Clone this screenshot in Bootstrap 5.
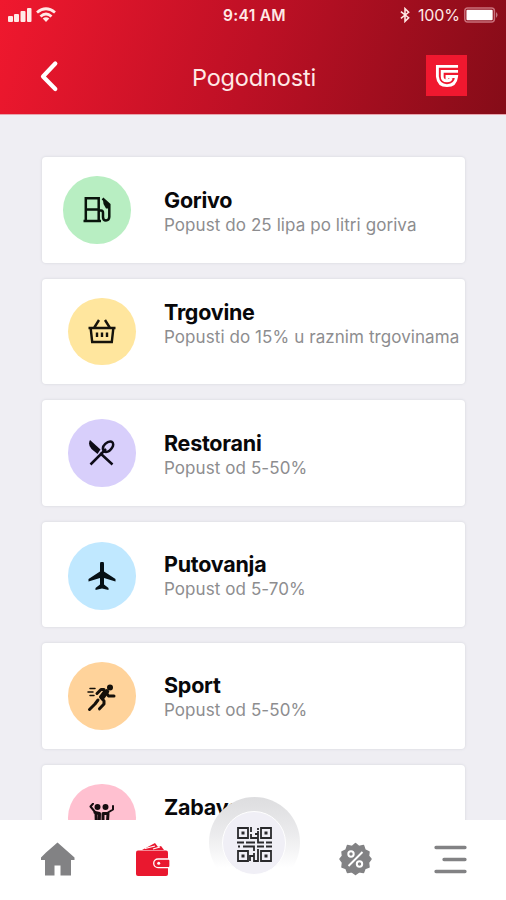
<!DOCTYPE html>
<html lang="hr">
<head>
<meta charset="utf-8">
<meta name="viewport" content="width=device-width, initial-scale=1">
<title>Pogodnosti</title>
<link href="https://cdn.jsdelivr.net/npm/bootstrap@5.3.0/dist/css/bootstrap.min.css" rel="stylesheet">
<style>
body{font-family:Inter,"Liberation Sans",sans-serif;background:#efeef3;color:#0b0b0d}
svg{display:block;flex:none}
.screen{width:506px;height:900px}
.top-area{height:115px;background:linear-gradient(107deg,#f0182e 0%,#bd1025 50%,#850c18 100%);border-bottom:1px solid #e7a4ad;color:#fff}
.status{height:28px;padding:0 7px 0 8px}
.clock{font-size:15.5px;font-weight:600;letter-spacing:.3px;line-height:29px;padding:1px 0 0 2px;color:#ffe9e6}
.battery-label{font-size:16px;line-height:28px;letter-spacing:-.1px;color:#ffe9e6}
.title-bar{height:86px;padding:9px 39px 0 39px}
.page-title{font-size:23.5px;font-weight:400;line-height:30px;color:#ffe9e6;letter-spacing:-.15px;padding:5px 0 0 2px}
.brand{width:41px;height:41px;background:#f0182f}
.offers{height:705px;padding:42px 41px 0;gap:16px}
.offer{height:105.5px;border:0;border-radius:4px;box-shadow:0 0 2px 1px #e1e1e7;margin-left:1px}
.icon-col{width:122px;padding-left:26px}
.icon-col.near{padding-left:21px}
.disc{width:67.5px;height:67.5px}
.disc.low{margin-top:3px}
.green{background:#b8eec2}.yellow{background:#ffe69e}.violet{background:#d8cffb}
.blue{background:#c0e8ff}.orange{background:#ffd39b}.pink{background:#ffc0d0}
.copy{padding-top:31px}
.copy.rise{padding-top:21px}
.copy.mid{padding-top:30px}
.name{font-size:21.5px;font-weight:700;line-height:25px;letter-spacing:-.25px;color:#08080a}
.desc{font-size:17px;line-height:24px;letter-spacing:.08px;color:#8d8d8f;white-space:nowrap}
.tabs{height:80px;color:#828284}
.tabs a{color:inherit}
.tab-row{padding:0 39px 2px 40px;height:80px}
.tab-pair{gap:60px}
.tab-pair.end{gap:62px}
.qr-ring{width:91px;height:91px;left:208.5px;top:-23px;background:linear-gradient(#dddddf 0%,#ebebed 40%,#fff 78%)}
.qr-core{width:64px;height:64px;background:#f0eff6;border:1.5px solid #fff}
</style>
</head>
<body>
<main class="screen d-flex flex-column overflow-hidden">
<header class="top-area flex-shrink-0">
  <div class="status row g-0">
    <div class="col-4 d-flex align-items-center gap-1">
      <svg width="24" height="16" viewBox="0 0 24 16" fill="#ffe9e6"><rect y="9" width="5" height="6" rx="1"/><rect x="6" y="7" width="5" height="8" rx="1"/><rect x="12.500" y="4" width="5" height="11" rx="1"/><rect x="19" y="1" width="4.500" height="14" rx="1"/></svg>
      <svg width="20" height="16" viewBox="0 0 20 16" fill="none" stroke="#ffe9e6" stroke-width="2.800"><path d="M1 5.500Q10-2 19 5.500M4.500 9.500Q10 4.500 15.500 9.500"/><path d="M6.700 11.500Q10 8.800 13.300 11.500L10 15Z" fill="#ffe9e6" stroke="none"/></svg>
    </div>
    <div class="col-4 text-center clock">9:41 AM</div>
    <div class="col-4 d-flex align-items-center justify-content-end">
      <svg class="me-2" width="10" height="16" viewBox="0 0 11 16" fill="none" stroke="#ffe9e6" stroke-width="1.700"><path d="M1 4.300 9.500 11 5.500 15V1L9.500 5 1 11.700"/></svg>
      <span class="battery-label me-1">100%</span>
      <svg width="35" height="16" viewBox="0 0 36 16"><rect x=".8" y=".8" width="30.500" height="14.400" rx="3" fill="none" stroke="#c9707b" stroke-width="1.500"/><rect x="2.500" y="2.700" width="27" height="10.600" rx="1" fill="#fff"/><path d="M33 5q3 3 0 6z" fill="#c3808a"/></svg>
    </div>
  </div>
  <div class="title-bar d-flex align-items-center justify-content-between">
    <a href="#" aria-label="Natrag"><svg width="41" height="32" viewBox="0 0 41 32" fill="none" stroke="#fff" stroke-width="4.200" stroke-linecap="round" stroke-linejoin="round"><path d="M16.300 3.500 4 16.500 16.300 29"/></svg></a>
    <h1 class="page-title mb-0">Pogodnosti</h1>
    <div class="brand d-flex align-items-center justify-content-center">
      <svg width="24" height="24" viewBox="0 0 25 25" fill="none" stroke="#fff" stroke-width="3"><path d="M24 2.500H2.500V13Q3.500 22.500 12.500 22.500T22.500 13H12.500V16.500"/><path d="M24 7.700H7.500V13Q7.500 17.500 12.500 17.500Q16 17.500 17 14.500"/></svg>
    </div>
  </div>
</header>

<section class="offers d-flex flex-column flex-shrink-0 overflow-hidden">
  <article class="card offer flex-row flex-shrink-0">
    <div class="icon-col near d-flex align-items-center flex-shrink-0"><div class="disc green rounded-circle d-flex align-items-center justify-content-center">
      <svg width="28" height="27" viewBox="0 0 28 27" fill="none" stroke="#09140c" stroke-width="2.500"><path d="M2.800 25V2.200H15.700V25M.5 24.900H18M3 13.500H15.700M15.700 14.500H18Q20 14.500 20 17V21Q20 24.500 23 24.500T26.300 21V8.500L19.500 2.500"/><path d="M20 4 26.500 9V12.500H23L20.500 8Z" fill="#09140c" stroke="none"/></svg>
    </div></div>
    <div class="copy"><h2 class="name mb-0">Gorivo</h2><p class="desc mb-0">Popust do 25 lipa po litri goriva</p></div>
  </article>
  <article class="card offer flex-row flex-shrink-0">
    <div class="icon-col d-flex align-items-center flex-shrink-0"><div class="disc yellow rounded-circle d-flex align-items-center justify-content-center">
      <svg width="28" height="26" viewBox="0 0 28 26" fill="none" stroke="#15130c" stroke-width="2.400"><path d="M.5 10H27.500M2.700 10.500 4.200 24H23.800L25.300 10.500M6.300 9.500 11 2M21.700 9.500 17 2"/><path d="M9 14.500V19M14 14.500V19M19 14.500V19"/></svg>
    </div></div>
    <div class="copy rise"><h2 class="name mb-0">Trgovine</h2><p class="desc mb-0">Popusti do 15% u raznim trgovinama</p></div>
  </article>
  <article class="card offer flex-row flex-shrink-0">
    <div class="icon-col d-flex align-items-center flex-shrink-0"><div class="disc violet rounded-circle d-flex align-items-center justify-content-center">
      <svg width="27" height="26" viewBox="0 0 27 26" fill="none" stroke="#0e0c17" stroke-width="2.500"><path d="M2.500 24.500 18 9M12 13 24.500 24.500"/><path d="M2 0 12.500 9.500 9.500 14 3.500 9Q-.5 4.500 2 0Z" fill="#0e0c17" stroke="none"/><path d="M15.500 10.500C13 6 20 .5 23.500 1.700 28 4 22.500 12 18 12Q16 12 15.500 10.500Z"/></svg>
    </div></div>
    <div class="copy"><h2 class="name mb-0">Restorani</h2><p class="desc mb-0">Popust od 5-50%</p></div>
  </article>
  <article class="card offer flex-row flex-shrink-0">
    <div class="icon-col d-flex align-items-center flex-shrink-0"><div class="disc low blue rounded-circle d-flex align-items-center justify-content-center">
      <svg width="28" height="28" viewBox="0 0 28 28" fill="#061016"><path d="M12 2Q12-.5 14-.5T16 2V9.500L27.500 17V19.500L16 16V22.500L20.500 26V28L14 26.400 7.500 28V26L12 22.500V16L.5 19.500V17L12 9.500Z"/></svg>
    </div></div>
    <div class="copy mid"><h2 class="name mb-0">Putovanja</h2><p class="desc mb-0">Popust od 5-70%</p></div>
  </article>
  <article class="card offer flex-row flex-shrink-0">
    <div class="icon-col d-flex align-items-center flex-shrink-0"><div class="disc orange rounded-circle d-flex align-items-center justify-content-center">
      <svg class="mt-1" width="29" height="28" viewBox="0 0 29 28" fill="none" stroke="#15100a" stroke-width="3" stroke-linecap="round" stroke-linejoin="round"><circle cx="23" cy="3.500" r="3" fill="#15100a" stroke="none"/><path d="M10 9.500 14 5.500H17M18 7 13.500 13 17 17V20L12.500 24.800M18 7 21.500 12H27M11 16 8 20 2.500 25.500"/><path d="M20 7.500 15.500 13.500" stroke-width="4.500"/><path d="M3 4.500H8M1 8H6M3 11.500H7" stroke-width="1.500"/></svg>
    </div></div>
    <div class="copy mid"><h2 class="name mb-0">Sport</h2><p class="desc mb-0">Popust od 5-50%</p></div>
  </article>
  <article class="card offer flex-row flex-shrink-0">
    <div class="icon-col d-flex align-items-center flex-shrink-0"><div class="disc pink rounded-circle d-flex align-items-center justify-content-center">
      <svg width="25" height="28" viewBox="0 0 25 28" fill="none" stroke="#160d10" stroke-width="2" stroke-linecap="round" stroke-linejoin="round"><circle cx="8.500" cy="4" r="2" fill="#160d10"/><circle cx="16.500" cy="4" r="2" fill="#160d10"/><path d="M4 .8 1.500 3.500 6 9M24 3V6.500L19 9.500"/><path d="M6 9.500 10.500 10.500 10 27M14 10.500H19L18 27M7 10 7.500 27M14 11V27" stroke-width="3"/></svg>
    </div></div>
    <div class="copy mid"><h2 class="name mb-0">Zabava</h2></div>
  </article>
</section>

<nav class="tabs bg-white position-relative flex-shrink-0">
  <div class="tab-row d-flex align-items-center justify-content-between">
    <div class="tab-pair d-flex align-items-center">
      <a href="#" aria-label="Početna"><svg width="35" height="34" viewBox="0 0 35 34" fill="currentColor"><path d="M17.500.5 6 10.500 1 15.500V18H5V33.500H14.500V23.500H20.500V33.500H31V18H34.500V15.500Z"/></svg></a>
      <a href="#" aria-label="Novčanik"><svg width="36" height="35" viewBox="0 0 36 35"><path d="M7 8 20 1 23 5 26 4 29 8Z" fill="#e9182f"/><path d="M10 6.500 20 4M18 7 25 5" stroke="#fff" stroke-width="1.200"/><rect x="1" y="8.500" width="32" height="25.500" rx="2" fill="#e9182f"/><path d="M33.500 17H23a4.300 4.300 0 0 0 0 8.600H33.500Q35 25.600 35 24V18.500Q35 17 33.500 17Z" fill="#e9182f" stroke="#fff" stroke-width="1.300"/><circle cx="23.700" cy="21.200" r="1.500" fill="#fff"/></svg></a>
    </div>
    <div class="tab-pair end d-flex align-items-center">
      <a href="#" aria-label="Popusti"><svg width="33" height="34" viewBox="0 0 33 34"><path fill="currentColor" stroke="currentColor" stroke-width="1.500" stroke-linejoin="round" d="M16.500 1.500 20 4.500 24.500 3.500 26 8 30 10 29.500 14 32 17 29.500 20.500 30 25 26 26.500 24.500 30.500 20 29.800 16.500 32.500 13 29.800 8.500 30.500 7 26.500 3 25 3.500 20.500 1 17 3.500 14 3 10 7 8 8.500 3.500 13 4.500Z"/><g fill="none" stroke="#fff" stroke-width="2"><circle cx="12" cy="12" r="2.700"/><circle cx="20.500" cy="22" r="2.700"/><path d="M9.500 24 23.500 10"/></g></svg></a>
      <a href="#" aria-label="Izbornik"><svg width="33" height="29" viewBox="0 0 33 29" fill="none" stroke="currentColor" stroke-width="3.300" stroke-linecap="round"><path d="M2 2.500H31M10 14.500H31M2 26.500H31"/></svg></a>
    </div>
  </div>
  <a href="#" class="qr-ring position-absolute rounded-circle d-flex align-items-center justify-content-center" aria-label="QR kod">
    <span class="qr-core rounded-circle d-flex align-items-center justify-content-center">
      <svg class="mt-1" width="35" height="35" viewBox="0 0 35 35" fill="none" stroke="#29292c" stroke-width="1.800"><path d="M1 1H11V11H1ZM24 1H34V11H24ZM1 24H11V34H1ZM24 24H34V34H24Z"/><path d="M4.500 4.500h3v3h-3zM27.500 4.500h3v3h-3zM4.500 27.500h3v3h-3zM27.500 27.500h3v3h-3z" fill="#29292c" stroke="none"/><path d="M14 0V5M14 7V11H21V4M18 7H21M21 1V3M0 15.500H7M9 15.500H18M21 11V15.500H27M29 15.500H35M1 19.500H3M6 19.500H17V24M20 19.500H27M29 19.500H35M21 22V34H17V30M13 34V29H17V26"/></svg>
    </span>
  </a>
</nav>
</main>
<script src="https://cdn.jsdelivr.net/npm/bootstrap@5.3.0/dist/js/bootstrap.bundle.min.js"></script>
</body>
</html>
